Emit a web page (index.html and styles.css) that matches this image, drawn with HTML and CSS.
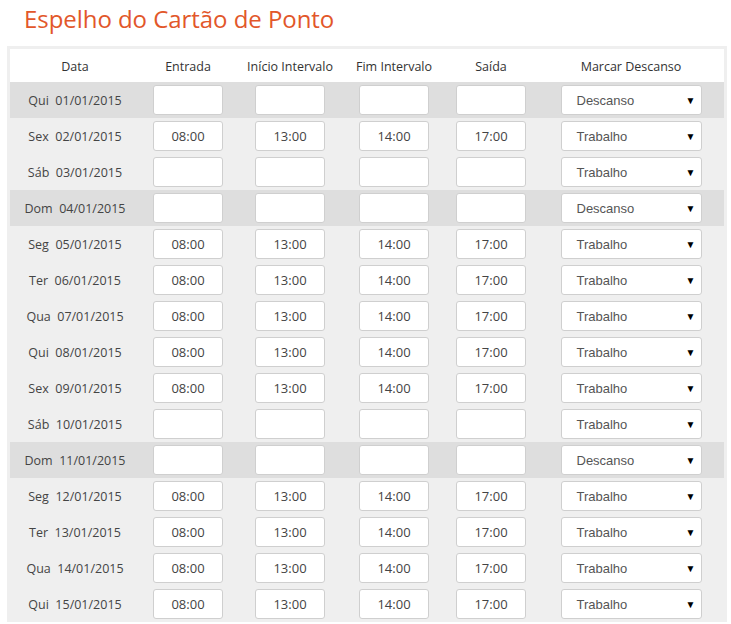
FILE: index.html
```html
<!DOCTYPE html>
<html lang="pt">
<head>
<meta charset="utf-8">
<title>Espelho do Cartão de Ponto</title>
<link rel="stylesheet" href="styles.css">
</head>
<body>
<h1 class="title">Espelho do Cartão de Ponto</h1>
<div class="card">
<table class="grid">
<colgroup>
<col class="c-data"><col class="c-ent"><col class="c-ini"><col class="c-fim"><col class="c-sai"><col class="c-sel">
</colgroup>
<thead>
<tr><th>Data</th><th>Entrada</th><th>Início Intervalo</th><th>Fim Intervalo</th><th>Saída</th><th>Marcar Descanso</th></tr>
</thead>
<tbody>
<tr class="rest"><td class="date">Qui&nbsp; 01/01/2015</td><td><span class="box"></span></td><td><span class="box"></span></td><td><span class="box"></span></td><td><span class="box"></span></td><td><span class="sel">Descanso<span class="arrow">▼</span></span></td></tr>
<tr><td class="date">Sex&nbsp; 02/01/2015</td><td><span class="box">08:00</span></td><td><span class="box">13:00</span></td><td><span class="box">14:00</span></td><td><span class="box">17:00</span></td><td><span class="sel">Trabalho<span class="arrow">▼</span></span></td></tr>
<tr><td class="date">Sáb&nbsp; 03/01/2015</td><td><span class="box"></span></td><td><span class="box"></span></td><td><span class="box"></span></td><td><span class="box"></span></td><td><span class="sel">Trabalho<span class="arrow">▼</span></span></td></tr>
<tr class="rest"><td class="date">Dom&nbsp; 04/01/2015</td><td><span class="box"></span></td><td><span class="box"></span></td><td><span class="box"></span></td><td><span class="box"></span></td><td><span class="sel">Descanso<span class="arrow">▼</span></span></td></tr>
<tr><td class="date">Seg&nbsp; 05/01/2015</td><td><span class="box">08:00</span></td><td><span class="box">13:00</span></td><td><span class="box">14:00</span></td><td><span class="box">17:00</span></td><td><span class="sel">Trabalho<span class="arrow">▼</span></span></td></tr>
<tr><td class="date">Ter&nbsp; 06/01/2015</td><td><span class="box">08:00</span></td><td><span class="box">13:00</span></td><td><span class="box">14:00</span></td><td><span class="box">17:00</span></td><td><span class="sel">Trabalho<span class="arrow">▼</span></span></td></tr>
<tr><td class="date">Qua&nbsp; 07/01/2015</td><td><span class="box">08:00</span></td><td><span class="box">13:00</span></td><td><span class="box">14:00</span></td><td><span class="box">17:00</span></td><td><span class="sel">Trabalho<span class="arrow">▼</span></span></td></tr>
<tr><td class="date">Qui&nbsp; 08/01/2015</td><td><span class="box">08:00</span></td><td><span class="box">13:00</span></td><td><span class="box">14:00</span></td><td><span class="box">17:00</span></td><td><span class="sel">Trabalho<span class="arrow">▼</span></span></td></tr>
<tr><td class="date">Sex&nbsp; 09/01/2015</td><td><span class="box">08:00</span></td><td><span class="box">13:00</span></td><td><span class="box">14:00</span></td><td><span class="box">17:00</span></td><td><span class="sel">Trabalho<span class="arrow">▼</span></span></td></tr>
<tr><td class="date">Sáb&nbsp; 10/01/2015</td><td><span class="box"></span></td><td><span class="box"></span></td><td><span class="box"></span></td><td><span class="box"></span></td><td><span class="sel">Trabalho<span class="arrow">▼</span></span></td></tr>
<tr class="rest"><td class="date">Dom&nbsp; 11/01/2015</td><td><span class="box"></span></td><td><span class="box"></span></td><td><span class="box"></span></td><td><span class="box"></span></td><td><span class="sel">Descanso<span class="arrow">▼</span></span></td></tr>
<tr><td class="date">Seg&nbsp; 12/01/2015</td><td><span class="box">08:00</span></td><td><span class="box">13:00</span></td><td><span class="box">14:00</span></td><td><span class="box">17:00</span></td><td><span class="sel">Trabalho<span class="arrow">▼</span></span></td></tr>
<tr><td class="date">Ter&nbsp; 13/01/2015</td><td><span class="box">08:00</span></td><td><span class="box">13:00</span></td><td><span class="box">14:00</span></td><td><span class="box">17:00</span></td><td><span class="sel">Trabalho<span class="arrow">▼</span></span></td></tr>
<tr><td class="date">Qua&nbsp; 14/01/2015</td><td><span class="box">08:00</span></td><td><span class="box">13:00</span></td><td><span class="box">14:00</span></td><td><span class="box">17:00</span></td><td><span class="sel">Trabalho<span class="arrow">▼</span></span></td></tr>
<tr><td class="date">Qui&nbsp; 15/01/2015</td><td><span class="box">08:00</span></td><td><span class="box">13:00</span></td><td><span class="box">14:00</span></td><td><span class="box">17:00</span></td><td><span class="sel">Trabalho<span class="arrow">▼</span></span></td></tr>
</tbody>
</table>
</div>
</body>
</html>
```
FILE: styles.css
```css
html, body {
  margin: 0;
  padding: 0;
  background: #fff;
}
body {
  font-family: "Open Sans", "Noto Sans", sans-serif;
  color: #333;
}
.title {
  margin: 0;
  padding: 3px 0 0 24px;
  height: 46px;
  box-sizing: border-box;
  font-weight: 400;
  font-size: 24px;
  line-height: 32px;
  color: #e2572a;
  letter-spacing: -0.05px;
}
.card {
  margin-left: 7px;
  width: 720px;
  box-sizing: border-box;
  border: 3px solid #efefef;
  border-bottom: 0;
}
.grid {
  width: 714px;
  border-collapse: collapse;
  table-layout: fixed;
}
.c-data { width: 130px; }
.c-ent { width: 96px; }
.c-ini { width: 108px; }
.c-fim { width: 100px; }
.c-sai { width: 94px; }
.c-sel { width: 186px; }
.grid th {
  height: 31px;
  padding: 2px 0 0;
  font-weight: 400;
  font-size: 12.5px;
  color: #333;
  background: #fff;
  text-align: center;
  vertical-align: middle;
}
.grid td {
  height: 36px;
  padding: 0;
  text-align: center;
  vertical-align: middle;
  background: #efefef;
}
.grid tr.rest td {
  background: #dedede;
}
.date {
  font-size: 12.5px;
  color: #444;
  white-space: nowrap;
}
.box {
  display: inline-flex;
  align-items: center;
  justify-content: center;
  width: 70px;
  height: 30px;
  box-sizing: border-box;
  border: 1px solid #cfcfcf;
  border-radius: 3px;
  background: #fff;
  font-family: "Open Sans", sans-serif;
  font-size: 13px;
  color: #444;
  vertical-align: middle;
}
.sel {
  display: inline-flex;
  align-items: center;
  justify-content: space-between;
  width: 141px;
  height: 30px;
  box-sizing: border-box;
  padding: 0 5px 0 15px;
  border: 1px solid #cfcfcf;
  border-radius: 3px;
  background: #fff;
  font-family: "Liberation Sans", Arial, sans-serif;
  font-size: 13px;
  color: #555;
  text-align: left;
  vertical-align: middle;
}
.arrow {
  font-size: 10px;
  color: #000;
}
```
